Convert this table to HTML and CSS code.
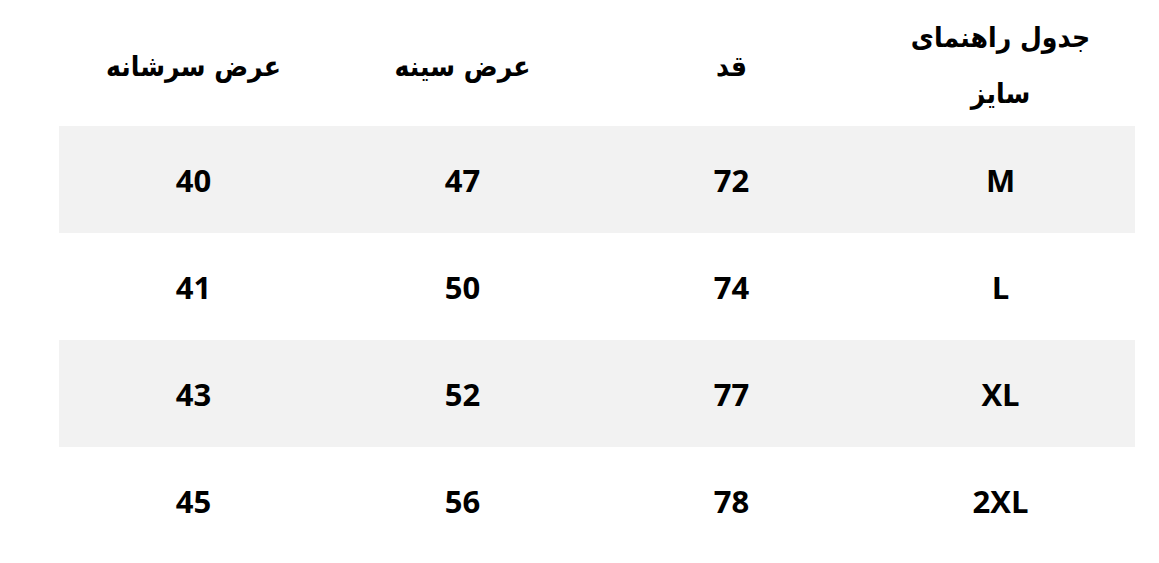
FILE: index.html
```html
<!DOCTYPE html>
<html lang="fa" dir="rtl">
<head>
<meta charset="utf-8">
<title>جدول راهنمای سایز</title>
<link rel="stylesheet" href="styles.css">
</head>
<body>
<div class="size-table">
  <div class="row head">
    <div class="cell title">جدول راهنمای<br>سایز</div>
    <div class="cell">قد</div>
    <div class="cell">عرض سینه</div>
    <div class="cell">عرض سرشانه</div>
  </div>
  <div class="row shade">
    <div class="cell">M</div><div class="cell">72</div><div class="cell">47</div><div class="cell">40</div>
  </div>
  <div class="row">
    <div class="cell">L</div><div class="cell">74</div><div class="cell">50</div><div class="cell">41</div>
  </div>
  <div class="row shade">
    <div class="cell">XL</div><div class="cell">77</div><div class="cell">52</div><div class="cell">43</div>
  </div>
  <div class="row">
    <div class="cell">2XL</div><div class="cell">78</div><div class="cell">56</div><div class="cell">45</div>
  </div>
</div>
</body>
</html>
```
FILE: styles.css
```css
html, body {
  margin: 0;
  padding: 0;
  background: #ffffff;
}
body {
  width: 1159px;
  height: 563px;
  overflow: hidden;
}
.size-table {
  margin-right: 24px;
  width: 1076px;
  direction: rtl;
  font-family: "Open Sans", "DejaVu Sans", sans-serif;
  font-weight: 700;
  color: #000;
}
.row {
  display: grid;
  grid-template-columns: repeat(4, 1fr);
  height: 107px;
  align-items: center;
  font-size: 31px;
}
.row.head {
  height: 126px;
  box-sizing: border-box;
  padding-top: 6px;
  font-family: "DejaVu Sans Condensed", "DejaVu Sans", sans-serif;
  font-size: 28px;
}
.row.shade {
  background: #f2f2f2;
}
.cell {
  text-align: center;
}
.title {
  line-height: 56px;
}
```
